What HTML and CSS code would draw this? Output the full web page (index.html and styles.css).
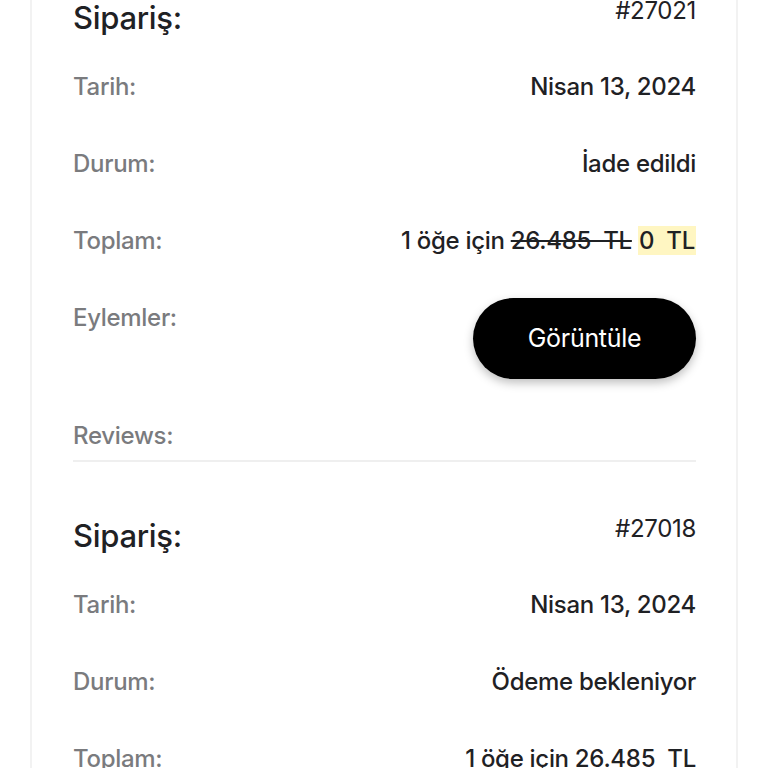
FILE: index.html
```html
<!DOCTYPE html>
<html lang="tr">
	<head>
		<meta charset="utf-8">
		<title>Siparişler</title>
		<link rel="stylesheet" href="styles.css">
	</head>
	<body>
		<div class="card">
			<div class="order">
				<div class="row head">
					<span class="title">Sipariş:</span>
					<span class="number">#27021</span>
				</div>
				<div class="row">
					<span class="label">Tarih:</span>
					<span class="value">Nisan 13, 2024</span>
				</div>
				<div class="row">
					<span class="label">Durum:</span>
					<span class="value">İade edildi</span>
				</div>
				<div class="row">
					<span class="label">Toplam:</span>
					<span class="value">1 öğe için <del>26.485&nbsp;&nbsp;TL</del> <ins>0&nbsp;&nbsp;TL</ins></span>
				</div>
				<div class="row">
					<span class="label">Eylemler:</span>
					<a href="##" class="btn">Görüntüle</a>
				</div>
				<div class="row reviews">
					<span class="label">Reviews:</span>
				</div>
			</div>
			<div class="order">
				<div class="row head">
					<span class="title">Sipariş:</span>
					<span class="number">#27018</span>
				</div>
				<div class="row">
					<span class="label">Tarih:</span>
					<span class="value">Nisan 13, 2024</span>
				</div>
				<div class="row">
					<span class="label">Durum:</span>
					<span class="value">Ödeme bekleniyor</span>
				</div>
				<div class="row">
					<span class="label">Toplam:</span>
					<span class="value">1 öğe için 26.485&nbsp;&nbsp;TL</span>
				</div>
			</div>
		</div>
	</body>
</html>
```

FILE: styles.css
```css
*{
	margin: 0;
	padding: 0;
	box-sizing: border-box;
}
body{
	background-color: #fff;
	font-family: "Inter", "Lato", sans-serif;
	color: #1f2124;
	overflow: hidden;
}
.card{
	width: 708px;
	margin: -2px auto 0;
	padding: 0 40px 40px 41px;
	border-left: 2px solid #f2f2f2;
	border-right: 2px solid #f2f2f2;
	background-color: #fff;
}
.order + .order{
	padding-top: 54px;
}
.row{
	display: flex;
	justify-content: space-between;
	align-items: flex-start;
	padding: 18px 0 19px;
	font-size: 24px;
	line-height: 40px;
	letter-spacing: -0.3px;
}
.row.head{
	padding: 0 0 11px;
}
.title{
	font-size: 31px;
	font-weight: 500;
	line-height: 40px;
}
.number{
	font-size: 24px;
	line-height: 26px;
}
.label{
	color: #7a7b7e;
	font-weight: 500;
}
.value{
	font-weight: 500;
}
del{
	text-decoration: line-through;
	text-decoration-thickness: 2px;
}
ins{
	text-decoration: none;
	background-color: #fff6c2;
	padding: 0 1px;
}
.btn{
	display: block;
	width: 223px;
	height: 81px;
	line-height: 81px;
	text-align: center;
	background-color: #000;
	color: #fff;
	text-decoration: none;
	border-radius: 41px;
	font-size: 25px;
	box-shadow: 0 4px 10px rgba(0,0,0,.25);
}
.row.reviews{
	padding-bottom: 4px;
	border-bottom: 2px solid #efefef;
}
```
